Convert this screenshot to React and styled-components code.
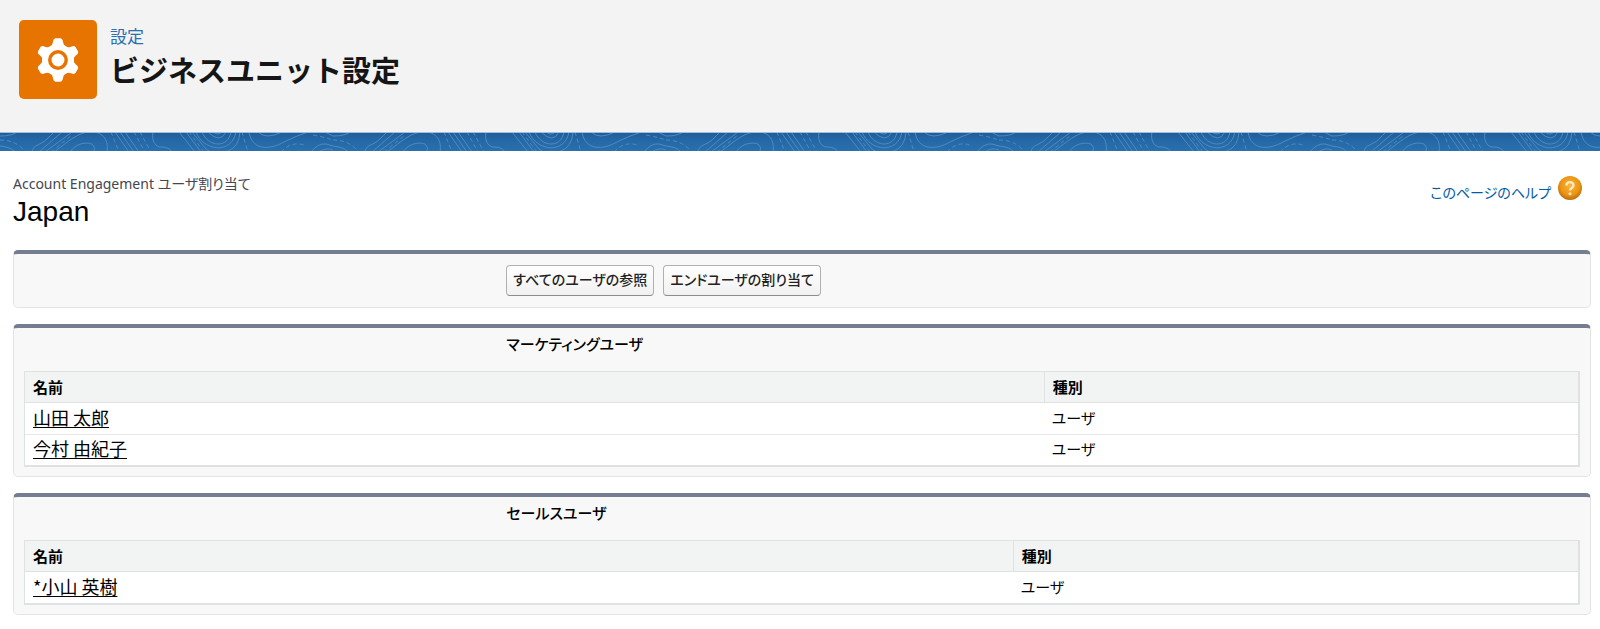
import React from 'react'
import styled, { createGlobalStyle } from 'styled-components';

const GlobalStyle = createGlobalStyle`
    * {
        box-sizing: border-box;
    }
    body {
        margin: 0;
        background: #fff;
        color: #000;
        font-family: 'Noto Sans CJK JP', 'Noto Sans', sans-serif;
        font-size: 15px;
        font-feature-settings: 'palt';
    }
`;

const Header = styled.header`
    display: flex;
    gap: 13px;
    height: 132px;
    padding: 20px 19px;
    background: #f3f3f3;
`;
const HeaderIcon = styled.div`
    display: flex;
    align-items: center;
    justify-content: center;
    width: 78px;
    height: 79px;
    border-radius: 5px;
    background: #e87400;
`;
const HeaderText = styled.div`
    display: flex;
    flex-direction: column;
    padding-top: 4px;
    font-feature-settings: normal;
`;
const Crumb = styled.span`
    color: #2a6fae;
    font-size: 17px;
    line-height: 24px;
`;
const PageTitle = styled.h1`
    margin: 0;
    color: #151515;
    font-size: 29px;
    font-weight: 700;
    line-height: 42px;
`;
const Band = styled.svg`
    display: block;
    width: 100%;
    height: 20px;
`;
const Main = styled.main`
    display: flex;
    flex-direction: column;
    gap: 16px;
    padding: 20px 9px 14px 13px;
`;
const SubHeader = styled.div`
    display: flex;
    justify-content: space-between;
    height: 62px;
`;
const SubLabel = styled.div`
    color: #444650;
    font-family: 'Noto Sans', 'Noto Sans CJK JP', sans-serif;
    font-size: 14px;
    line-height: 24px;
`;
const SubTitle = styled.h2`
    margin: 0;
    font-family: 'Liberation Sans', 'Noto Sans CJK JP', sans-serif;
    font-size: 28px;
    font-weight: 400;
    line-height: 32px;
`;
const HelpLink = styled.a`
    display: flex;
    gap: 7px;
    height: 32px;
    padding-right: 9px;
    align-items: center;
    color: #015ba7;
    font-size: 14px;
    text-decoration: none;
`;
const HelpText = styled.span`
    align-self: flex-end;
    line-height: 24px;
`;
const Panel = styled.section`
    padding: 0 10px 9px;
    border: 1px solid #e2e4e6;
    border-top: 4px solid #747e90;
    border-radius: 5px;
    background: #f8f8f8;
`;
const ButtonRow = styled.div`
    display: flex;
    gap: 9px;
    padding: 11px 0 2px 31%;
`;
const Button = styled.button`
    height: 31px;
    padding: 0 6px 4px;
    border: 1px solid #b0b0b0;
    border-bottom-color: #8c8c8c;
    border-radius: 4px;
    background: linear-gradient(#fff, #f1f1f1);
    color: #222;
    font: inherit;
    font-size: 14px;
    font-weight: 500;
    font-feature-settings: inherit;
    line-height: 24px;
`;
const PanelTitle = styled.h3`
    height: 43px;
    margin: 0;
    padding: 3px 0 0 31%;
    font-size: 15px;
    font-weight: 500;
    line-height: 26px;
`;
const Table = styled.table`
    width: 100%;
    table-layout: fixed;
    border: 1px solid #dfe2e2;
    border-right-width: 2px;
    border-bottom-width: 2px;
    border-spacing: 0;
    background: #fff;
`;
const HeadCell = styled.th`
    width: ${({$width})=>$width};
    height: 31px;
    padding: 0 8px;
    border-bottom: 1px solid #dfe2e2;
    background: #f2f4f4;
    font-size: 15px;
    font-weight: 700;
    line-height: 24px;
    text-align: left;
    & + & {
        border-left: 1px solid #dfe2e2;
    }
`;
const Cell = styled.td`
    height: 31px;
    padding: 0 8px 2px;
    line-height: 24px;
    tr + tr > & {
        border-top: 1px solid #e6e8e8;
    }
`;
const UserLink = styled.a`
    color: #000;
    font-size: 18px;
    text-decoration: underline;
    text-underline-offset: 2px;
`;

const marketingUsers = [
    { name: '山田 太郎', type: 'ユーザ' },
    { name: '今村 由紀子', type: 'ユーザ' },
];
const salesUsers = [
    { name: '*小山 英樹', type: 'ユーザ' },
];

const GearIcon = () => (
    <svg width="44" height="44" viewBox="-22 -22 44 44" aria-hidden="true">
        <g fill="#fff">
            <circle r="16" />
            {[0, 60, 120, 180, 240, 300].map((angle)=>(
                <path
                    key={angle}
                    transform={`rotate(${angle})`}
                    d="M-8.5 -12.5 Q-5.4 -14.5 -5 -18 Q-4.6 -21.7 -2 -21.7 H2 Q4.6 -21.7 5 -18 Q5.4 -14.5 8.5 -12.5 Z"
                />
            ))}
        </g>
        <circle r="8.2" fill="#fff" stroke="#e87400" strokeWidth="3.5" />
    </svg>
)

const HelpIcon = () => (
    <svg width="24" height="24" viewBox="0 0 24 24" aria-hidden="true">
        <defs>
            <radialGradient id="help" cx="50%" cy="40%" r="60%">
                <stop offset="0" stopColor="#fbb43c" />
                <stop offset="0.65" stopColor="#ec9514" />
                <stop offset="1" stopColor="#b96c0c" />
            </radialGradient>
        </defs>
        <circle cx="12" cy="12" r="12" fill="url(#help)" />
        <path d="M8.5 9.5C8.5 5 15.5 5 15.5 9.3C15.5 12 12 11.8 12 14.5" fill="none" stroke="#ffe9c2" strokeWidth="2.4" />
        <circle cx="12" cy="17.8" r="1.5" fill="#ffe9c2" />
    </svg>
)

const TopoBand = () => (
    <Band aria-hidden="true">
        <defs>
            <linearGradient id="sea" x1="0" y1="0" x2="0" y2="1">
                <stop offset="0" stopColor="#205b98" />
                <stop offset="0.4" stopColor="#2467a6" />
                <stop offset="1" stopColor="#2a70ad" />
            </linearGradient>
            <pattern id="topo" width="333" height="20" patternUnits="userSpaceOnUse">
                <g fill="none" stroke="#4b8abf" strokeWidth="1">
                    <path d="M0 4Q12 4 17 0M32 20C33 12 40 14 47 7Q51 3 54 0M39 20L62 0M45 20Q60 9 72 0M54 20C68 10 78 0 90 0C104 -1 109 10 107 20M70 20C76 11 86 10 92 12Q96 15 94 20" />
                    <path d="M115 0L129 20M120 0L134 20M125 0L139 20M153 0C151 9 156 16 162 15Q169 15 172 20" />
                    <path d="M179 0L195 20M186 0L201 20M192 0L206 17Q214 24 228 19Q239 15 240 0M196 0C204 20 232 22 236 0M202 0C208 15 228 17 231 0M208 0Q220 12 226 0M213 0Q218 4 222 0" />
                    <path d="M249 0C252 19 270 18 284 10Q296 4 308 0M258 0Q266 8 282 0M311 20Q318 11 326 12L333 14M319 20Q326 15 333 18" />
                    <path d="M0 14Q11 15 15 20M325 0L333 4" />
                    <g strokeDasharray="4 3">
                        <path d="M0 8Q14 8 23 17M51 20L72 3M111 0L119 20M134 0L145 20M140 0L151 20M189 0L204 20M242 0L248 20M281 20Q291 9 304 13M313 3Q324 5 333 8" />
                    </g>
                </g>
            </pattern>
        </defs>
        <rect width="100%" height="19" fill="url(#sea)" />
        <rect width="100%" height="19" fill="url(#topo)" />
        <rect width="100%" height="1" fill="#9fc0da" />
    </Band>
)

const UserPanel = ({title, users, nameWidth}) => {
    return (
        <Panel>
            <PanelTitle>{title}</PanelTitle>
            <Table aria-label={title}>
                <thead>
                    <tr>
                        <HeadCell $width={nameWidth}>名前</HeadCell>
                        <HeadCell>種別</HeadCell>
                    </tr>
                </thead>
                <tbody>
                {users.map((user)=>(
                    <tr key={user.name}>
                        <Cell><UserLink href="#">{user.name}</UserLink></Cell>
                        <Cell>{user.type}</Cell>
                    </tr>
                ))}
                </tbody>
            </Table>
        </Panel>
    )
}

const App = () => {
    return (
        <>
            <GlobalStyle />
            <Header>
                <HeaderIcon><GearIcon /></HeaderIcon>
                <HeaderText>
                    <Crumb>設定</Crumb>
                    <PageTitle>ビジネスユニット設定</PageTitle>
                </HeaderText>
            </Header>
            <TopoBand />
            <Main>
                <SubHeader>
                    <div>
                        <SubLabel>Account Engagement ユーザ割り当て</SubLabel>
                        <SubTitle>Japan</SubTitle>
                    </div>
                    <HelpLink href="#">
                        <HelpText>このページのヘルプ</HelpText>
                        <HelpIcon />
                    </HelpLink>
                </SubHeader>
                <Panel>
                    <ButtonRow>
                        <Button type="button">すべてのユーザの参照</Button>
                        <Button type="button">エンドユーザの割り当て</Button>
                    </ButtonRow>
                </Panel>
                <UserPanel title="マーケティングユーザ" users={marketingUsers} nameWidth="65.6%" />
                <UserPanel title="セールスユーザ" users={salesUsers} nameWidth="63.6%" />
            </Main>
        </>
    )
}

export default App
